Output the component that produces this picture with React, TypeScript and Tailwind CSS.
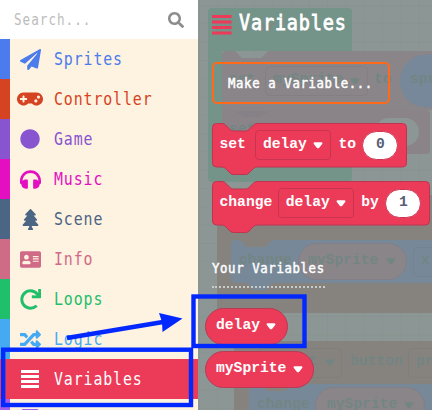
import React from "react";
import {
  FaSearch,
  FaPaperPlane,
  FaGamepad,
  FaCircle,
  FaHeadphones,
  FaTree,
  FaAddressCard,
  FaRedo,
  FaRandom,
  FaCalculator,
} from "react-icons/fa";

const narrow = "inline-block origin-left whitespace-pre font-['DejaVu_Sans_Mono',monospace]";
const code = "font-['Liberation_Mono',monospace] font-bold text-[14.67px] leading-none whitespace-pre";

const categories = [
  { name: "Sprites", stripe: "bg-[#4b7bec]", text: "text-[#4b7bec]", Icon: FaPaperPlane, size: 21 },
  { name: "Controller", stripe: "bg-[#d54322]", text: "text-[#d54322]", Icon: FaGamepad, size: 26 },
  { name: "Game", stripe: "bg-[#8854d0]", text: "text-[#8854d0]", Icon: FaCircle, size: 20 },
  { name: "Music", stripe: "bg-[#e30fc0]", text: "text-[#e30fc0]", Icon: FaHeadphones, size: 21 },
  { name: "Scene", stripe: "bg-[#4b6584]", text: "text-[#4b6584]", Icon: FaTree, size: 21 },
  { name: "Info", stripe: "bg-[#cf6a87]", text: "text-[#cf6a87]", Icon: FaAddressCard, size: 21 },
  { name: "Loops", stripe: "bg-[#20bf6b]", text: "text-[#20bf6b]", Icon: FaRedo, size: 21 },
  { name: "Logic", stripe: "bg-[#45aaf2]", text: "text-[#45aaf2]", Icon: FaRandom, size: 21 },
];

function Label({ children }: { children: string }) {
  return (
    <span className={`${narrow} scale-x-[0.86] text-[17.3px] leading-none tracking-[1.05px]`}>{children}</span>
  );
}

function Sidebar() {
  return (
    <aside className="flex h-[410px] w-[198px] shrink-0 flex-col overflow-hidden bg-[#fef2e0]">
      <div className="flex h-[39px] shrink-0 items-center justify-between bg-white pr-[14px] pl-[14px]">
        <span className={`${narrow} mt-[1px] scale-x-[0.84] text-[15px] leading-none tracking-[1.2px] text-[#bcbcbc]`}>
          Search...
        </span>
        <FaSearch size={16} className="text-[#8c8c8c]" />
      </div>
      {categories.map(({ name, stripe, text, Icon, size }) => (
        <div key={name} className={`flex h-10 shrink-0 items-center ${text}`}>
          <div className={`h-full w-[10px] ${stripe}`} />
          <div className="flex w-10 justify-center">
            <Icon size={size} />
          </div>
          <div className="flex pt-[2px] pl-[4px]">
            <Label>{name}</Label>
          </div>
        </div>
      ))}
      <div className="flex h-10 shrink-0 items-center bg-[#ec3b59] pl-[10px] text-white">
        <div className="flex w-10 justify-center">
          <svg width="18" height="20" viewBox="0 0 18 20" fill="currentColor">
            <path d="M0 1h18v3H0zM0 6h18v3H0zM0 11h18v3H0zM0 16h18v3H0z" />
          </svg>
        </div>
        <div className="flex pt-[2px] pl-[4px]">
          <Label>Variables</Label>
        </div>
      </div>
      <div className="flex h-10 shrink-0 text-[#a55eea]">
        <div className="h-full w-[10px] bg-[#a55eea]" />
        <div className="flex w-10 justify-center pt-[10px]">
          <FaCalculator size={20} />
        </div>
      </div>
    </aside>
  );
}

function Caret() {
  return (
    <svg width="10" height="7" viewBox="0 0 10 7" fill="currentColor">
      <path d="M1.3 0.3h7.4q1.3 .6 .5 1.8L6 5.9q-1 .9-2 0L.8 2.1Q0 .9 1.3 .3z" />
    </svg>
  );
}

function blockPath(w: number) {
  return `M4.5 .5H10q2 0 3.5 1.5l4.5 4.5q1.5 1.500 3.500 1.500h12q2 0 3.500-1.500l4.500-4.500Q43 .5 45 .5H${w - 4.5}q4 0 4 4V40q0 4-4 4H45q-2 0-3.500 1.500l-4.500 4.500q-1.500 1.500-3.500 1.500h-12q-2 0-3.500-1.500l-4.500-4.500Q12 44 10 44H4.500q-4 0-4-4V4.500q0-4 4-4z`;
}

function Block({ width, verb, link, value }: { width: number; verb: string; link: string; value: string }) {
  return (
    <div className="relative h-[52px]">
      <svg className="absolute inset-0" width={width} height="52" fill="#ec3b59" stroke="#bf3550">
        <path d={blockPath(width)} />
      </svg>
      <div className={`relative flex h-[44px] items-center pl-[7.5px] text-white ${code}`}>
        <span className="-mt-[1px]">{verb}</span>
        <span className={`${verb === "set" ? "ml-[9px]" : "ml-[5.5px]"} flex h-[30px] w-[76px] items-center justify-between rounded-[4px] border border-[#c93550] pr-[7px] pl-[7px]`}>
          <span className="-mt-[1px]">delay</span>
          <Caret />
        </span>
        <span className="mr-[6.5px] ml-[7.5px] -mt-[1px]">{link}</span>
        <span className="flex h-[29px] w-[36px] items-center justify-center rounded-full border border-[#cf3652] bg-white pb-[1px] text-[#575e75]">
          {value}
        </span>
      </div>
    </div>
  );
}

function Reporter({ name }: { name: string }) {
  return (
    <div className={`flex h-[37px] w-fit items-center gap-[6.5px] rounded-full border border-[#b83a53] bg-[#ec3b59] pr-[10.5px] pl-[10px] text-white ${code}`}>
      <span className="-mt-[1px]">{name}</span>
      <Caret />
    </div>
  );
}

/* Dimmed workspace that sits beneath the translucent flyout. */
function Workspace() {
  return (
    <div className="absolute inset-0 overflow-hidden bg-[#8c9694]">
      <svg className="absolute inset-0" width="234" height="410">
        <defs>
          <pattern id="grid" width="18.3" height="18.3" x="1" y="5" patternUnits="userSpaceOnUse">
            <path d="M.5 0V18.3M0 .5H18.3" stroke="#89938f" fill="none" />
          </pattern>
        </defs>
        <rect width="234" height="410" fill="url(#grid)" />
        <path d="M14 8H150q4 0 4 4V51H24V155H154V178q0 4-4 4H14q-4 0-4-4V12q0-4 4-4z" fill="#749389" />
        <path d="M28 51H37l7 7h19l7-7H234V110H24V55q0-4 4-4z" fill="#8a8589" />
        <path d="M24 110H228q4 0 4 4V150q0 4-4 4H28q-4 0-4-4z" fill="#8a8488" />
        <path d="M38 111l7 6h18l7-6z" fill="#868186" />
        <rect x="67.500" y="66.500" width="102" height="29" rx="4" fill="none" stroke="#857f83" />
        <rect x="202" y="54.500" width="80" height="53" rx="26.500" fill="#768899" />
        <rect x="177" y="118" width="44" height="28" rx="14" fill="#8c9694" />
        <path d="M23 195H234V313H19V199q0-4 4-4z" fill="#86837f" />
        <path d="M34 229h18v1q0 2-2 2H36q-2 0-2-2z" fill="#ec3b59" />
        <path d="M37 240H42l7 7h18l7-7H234V283H74l-7 7H56l-7-7H37q-4 0-4-4V244q0-4 4-4z" fill="#778998" />
        <rect x="100.500" y="243.500" width="108" height="36" rx="18" fill="#8a8589" stroke="#827f88" />
        <rect x="215.500" y="247.500" width="40" height="29" rx="4" fill="none" stroke="#728493" />
        <path d="M40 341H234V410H36V345q0-4 4-4z" fill="#86837f" />
        <rect x="60.500" y="348.500" width="83" height="29" rx="4" fill="none" stroke="#807e7a" />
        <rect x="210.500" y="348.500" width="60" height="29" rx="4" fill="none" stroke="#807e7a" />
        <path d="M55 384H62l7 7h18l7-7H234V410H51V388q0-4 4-4z" fill="#778998" />
        <rect x="117.500" y="387.500" width="109" height="36" rx="18" fill="#8a8589" stroke="#827f88" />
      </svg>
      <div className={`text-[#738583] ${code}`}>
        <span className="absolute top-[20px] left-[17px] text-[#7d8b86]">on start</span>
        <span className="absolute top-[72px] left-[31px]">set</span>
        <span className="absolute top-[72px] left-[75px]">mySprite</span>
        <span className="absolute top-[78px] left-[152px]"><Caret /></span>
        <span className="absolute top-[72px] left-[176px]">to</span>
        <span className="absolute top-[72px] left-[212px]">sprite</span>
        <span className="absolute top-[122px] left-[31px]">set</span>
        <span className="absolute top-[253px] left-[41px]">change</span>
        <span className="absolute top-[253px] left-[110px]">mySprite</span>
        <span className="absolute top-[258px] left-[188px]"><Caret /></span>
        <span className="absolute top-[253px] left-[223px]">x</span>
        <span className="absolute top-[354px] left-[110px]">t</span>
        <span className="absolute top-[359px] left-[127px]"><Caret /></span>
        <span className="absolute top-[354px] left-[152px]">button</span>
        <span className="absolute top-[354px] left-[218px]">pressed</span>
        <span className="absolute top-[397px] left-[59px]">change</span>
        <span className="absolute top-[397px] left-[129px]">mySprite</span>
        <span className="absolute top-[402px] left-[206px]"><Caret /></span>
      </div>
    </div>
  );
}

function Flyout() {
  return (
    <section className="relative h-[410px] w-[234px] overflow-hidden">
      <Workspace />
      <div className="relative flex flex-col items-start pl-[14px] text-white">
        <h1 className="flex h-[38px] items-center pt-[8px]">
          <svg width="20" height="20" viewBox="0 0 20 20" fill="#ec3b59" className="mt-[4px]">
            <path d="M0 0h19.500v3H0zM0 5.500h19.500v3H0zM0 11h19.500v3H0zM0 16.500h19.500v3H0z" />
          </svg>
          <span className={`${narrow} ml-[7px] w-0 scale-x-[0.88] text-[21px] leading-none font-normal tracking-[0.95px] [-webkit-text-stroke:0.8px_white]`}>
            Variables
          </span>
        </h1>
        <button className="mt-[24px] flex h-[42px] w-[178px] items-center rounded-[5px] border-2 border-[#ff6a1a] pl-[14px]">
          <span className={`${narrow} w-0 scale-x-[0.88] text-[14px] leading-none tracking-[0.72px] [-webkit-text-stroke:0.5px_white]`}>
            Make a Variable...
          </span>
        </button>
        <div className="mt-[19px] flex flex-col gap-[6px]">
          <Block width={195} verb="set" link="to" value="0" />
          <Block width={218} verb="change" link="by" value="1" />
        </div>
        <h2 className="mt-[27px] flex h-[28px] w-[113px] border-b-2 border-dotted border-[#c8cdcb] pt-[1px]">
          <span className={`${narrow} w-0 scale-x-[0.88] text-[14px] leading-none tracking-[0.72px] [-webkit-text-stroke:0.5px_white]`}>
            Your Variables
          </span>
        </h2>
        <div className="mt-[19.500px] -ml-[7px] flex flex-col gap-[6px]">
          <Reporter name="delay" />
          <Reporter name="mySprite" />
        </div>
      </div>
    </section>
  );
}

/* Hand-drawn tutorial marks laid over the editor. */
function Annotations() {
  return (
    <svg className="pointer-events-none absolute inset-0" width="432" height="410" fill="none" stroke="#0028ff">
      <rect x="3.200" y="349.700" width="187.800" height="55.300" strokeWidth="4.400" />
      <rect x="193.500" y="296.500" width="111" height="49.500" strokeWidth="4.400" />
      <path d="M67 338L163 322" strokeWidth="4.400" />
      <path d="M182.500 318.500L159 313l3 9 .5 10z" fill="#0028ff" stroke="none" />
    </svg>
  );
}

export default function App() {
  return (
    <main className="relative flex h-[410px] w-[432px] overflow-hidden">
      <Sidebar />
      <Flyout />
      <Annotations />
    </main>
  );
}
